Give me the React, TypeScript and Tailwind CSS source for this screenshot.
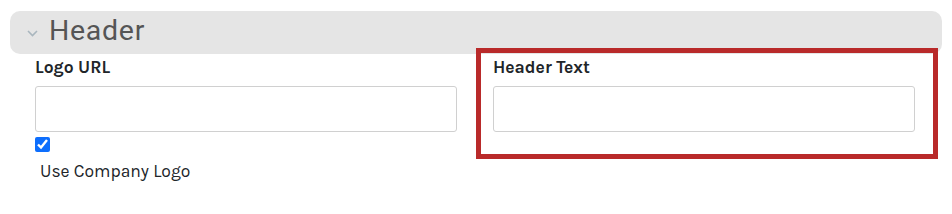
import React from "react";

export default function App() {
  return (
    <div className="relative w-[952px] h-[214px] bg-white overflow-hidden" style={{ fontFamily: "Karla, 'Open Sans', 'Liberation Sans', sans-serif" }}>
      <div className="mx-[10px] mt-[11px] h-[43px] rounded-[10px] bg-[#e5e5e5] flex items-center">
        <svg width="11" height="7" viewBox="0 0 11 7" className="ml-[17px] mt-[1px]" fill="none">
          <path d="M1 1 L5.5 5.5 L10 1" stroke="#a9b6be" strokeWidth="1.6" />
        </svg>
        <span className="ml-[11px] -mt-[3px] text-[28.5px] leading-none text-[#555] tracking-[0.7px]" style={{ fontFamily: "Roboto, 'Liberation Sans', sans-serif" }}>
          Header
        </span>
      </div>
      <div className="flex gap-[36px] pl-[35px] pr-[37px] mt-[1px]">
        <div className="flex-1 flex flex-col">
          <label className="text-[17.5px] leading-6 font-bold text-[#212529]">Logo URL</label>
          <input className="mt-[7px] h-[46px] w-full border border-[#d0d0d0] rounded-[3px] outline-none" />
          <input type="checkbox" defaultChecked className="mt-[5px] w-[15px] h-[15px] accent-[#0d6efd]" />
          <span className="mt-[7px] ml-[5px] text-[17.5px] leading-6 text-[#212529]">Use Company Logo</span>
        </div>
        <div className="flex-1 flex flex-col">
          <label className="text-[17.5px] leading-6 font-bold text-[#212529]">Header Text</label>
          <input className="mt-[7px] h-[46px] w-full border border-[#d0d0d0] rounded-[3px] outline-none" />
        </div>
      </div>
      <div className="absolute left-[476px] top-[48px] w-[462px] h-[111px] border-[5px] border-[#b92a2a] pointer-events-none" />
    </div>
  );
}
